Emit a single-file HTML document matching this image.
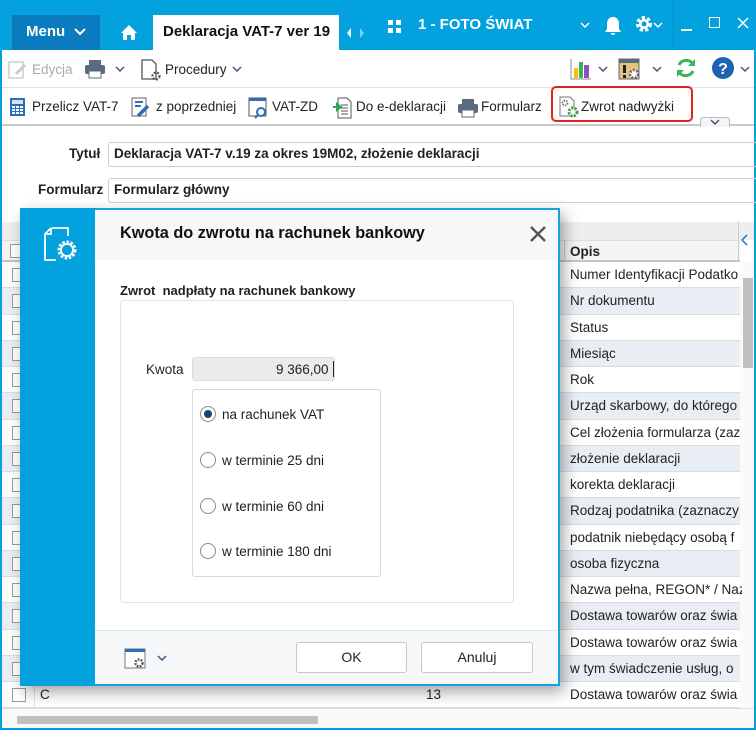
<!DOCTYPE html>
<html><head><meta charset="utf-8"><style>
*{box-sizing:border-box;margin:0;padding:0}
body{width:756px;height:730px;overflow:hidden;font-family:"Liberation Sans",sans-serif;font-size:13px;color:#222;background:#fff;position:relative}
.abs{position:absolute}
.win{position:absolute;left:0;top:0;width:756px;height:730px;border:2px solid #05a0df;border-top:none}
.title{left:0;top:0;width:756px;height:50px;background:#04a1df}
.tb1{top:50px;left:2px;width:752px;height:38px;border-bottom:1px solid #e2e2e2}
.tb2{top:89px;left:2px;width:752px;height:37px;border-bottom:2px solid #c8c8c8}
.t{position:absolute;white-space:nowrap}
.tb2 .t,.tb1 .t{font-size:13.5px!important}
.row{position:absolute;left:2px;width:738px;height:26.25px;border-bottom:1px solid #d8dde2}
.row.s{background:#e8eef3}
.cb{position:absolute;left:10px;top:6px;width:14px;height:14px;border:1px solid #9a9a9a;background:#fff}
.row .o{position:absolute;left:568px;top:5px;font-size:13.5px;white-space:nowrap;width:172px;overflow:hidden}
.radio{position:absolute;left:200px;width:16px;height:16px;border-radius:50%;border:1px solid #8a8a8a;background:#fff}
</style></head><body>
<div class="abs title">
 <div class="abs" style="left:12px;top:15px;width:88px;height:35px;background:#0a7bbf"></div>
 <div class="t" style="left:26px;top:23px;color:#fff;font-weight:bold;font-size:15px">Menu</div>
 <svg class="abs" style="left:74px;top:28px" width="12" height="8"><path d="M1 1l5 5 5-5" stroke="#fff" stroke-width="2" fill="none"/></svg>
 <svg class="abs" style="left:120px;top:24px" width="18" height="17"><path d="M9 1L1 9h2v7h4v-5h4v5h4V9h2z" fill="#fff"/></svg>
 <div class="abs" style="left:153px;top:15px;width:186px;height:35px;background:#fff"></div>
 <div class="t" style="left:163px;top:23px;font-weight:bold;font-size:15px;color:#111">Deklaracja VAT-7 ver 19</div>
 <svg class="abs" style="left:346px;top:27px" width="20" height="12"><path d="M5 1L1 6l4 5z" fill="#fff"/><path d="M14 1l4 5-4 5z" fill="#7fd0f0"/></svg>
 <svg class="abs" style="left:388px;top:20px" width="14" height="14"><rect x="0" y="0" width="5" height="5" fill="#fff"/><rect x="8" y="0" width="5" height="5" fill="#fff"/><rect x="0" y="8" width="5" height="5" fill="#fff"/><rect x="8" y="8" width="5" height="5" fill="#fff"/></svg>
 <div class="t" style="left:418px;top:16px;color:#fff;font-weight:bold;font-size:15px">1 - FOTO ŚWIAT</div>
 <svg class="abs" style="left:580px;top:22px" width="10" height="7"><path d="M1 1l4 4 4-4" stroke="#fff" stroke-width="1.5" fill="none"/></svg>
 <svg class="abs" style="left:604px;top:16px" width="18" height="20"><path d="M9 1c-4 0-6 3-6 7v5l-2 3h16l-2-3V8c0-4-2-7-6-7z M7 17h4a2 2 0 0 1-4 0" fill="#fff"/></svg>
 <svg class="abs" style="left:635px;top:15px" width="18" height="18"><circle cx="9" cy="9" r="6" fill="none" stroke="#fff" stroke-width="4" stroke-dasharray="3 2.2"/><circle cx="9" cy="9" r="5" fill="#fff"/><circle cx="9" cy="9" r="2.5" fill="#04a1df"/></svg>
 <svg class="abs" style="left:653px;top:22px" width="10" height="7"><path d="M1 1l4 4 4-4" stroke="#fff" stroke-width="1.5" fill="none"/></svg>
 <div class="abs" style="left:673px;top:0;width:1px;height:50px;background:#0890c8"></div>
 <div class="abs" style="left:681px;top:29px;width:11px;height:1.5px;background:#fff"></div>
 <div class="abs" style="left:709px;top:17px;width:11px;height:11px;border:1.5px solid #fff"></div>
 <svg class="abs" style="left:737px;top:17px" width="12" height="12"><path d="M1 1l10 10M11 1L1 11" stroke="#fff" stroke-width="1.5"/></svg>
</div>
<div class="win"></div>
<div class="abs tb1">
 <svg class="abs" style="left:6px;top:10px" width="20" height="20"><rect x="1" y="2" width="14" height="16" fill="none" stroke="#ccc" stroke-width="1.5"/><path d="M8 14l9-9" stroke="#ccc" stroke-width="3"/></svg>
 <div class="t" style="left:30px;top:12px;color:#aaa;font-size:14px">Edycja</div>
 <svg class="abs" style="left:82px;top:9px" width="22" height="20"><rect x="5" y="1" width="12" height="5" fill="#5a6b7d"/><rect x="1" y="6" width="20" height="9" rx="2" fill="#5a6b7d"/><rect x="5" y="12" width="12" height="7" fill="#fff" stroke="#5a6b7d"/></svg>
 <svg class="abs" style="left:113px;top:16px" width="10" height="7"><path d="M1 1l4 4 4-4" stroke="#3a5a80" stroke-width="1.5" fill="none"/></svg>
 <svg class="abs" style="left:138px;top:9px" width="22" height="22"><path d="M2 1h10l4 4v15H2z" fill="none" stroke="#555" stroke-width="1.3"/><circle cx="16" cy="17" r="3.5" fill="none" stroke="#555" stroke-width="2.2" stroke-dasharray="2 1.5"/></svg>
 <div class="t" style="left:163px;top:12px;font-size:14px">Procedury</div>
 <svg class="abs" style="left:230px;top:16px" width="10" height="7"><path d="M1 1l4 4 4-4" stroke="#3a5a80" stroke-width="1.5" fill="none"/></svg>
 <svg class="abs" style="left:568px;top:8px" width="22" height="22"><path d="M1 1v20h20" stroke="#888" fill="none"/><rect x="4" y="10" width="4" height="10" fill="#f3c300"/><rect x="9" y="4" width="4" height="16" fill="#3ab54a"/><rect x="14" y="7" width="5" height="13" fill="#8d4fc4"/></svg>
 <svg class="abs" style="left:596px;top:16px" width="10" height="7"><path d="M1 1l4 4 4-4" stroke="#3a5a80" stroke-width="1.5" fill="none"/></svg>
 <svg class="abs" style="left:616px;top:8px" width="24" height="22"><rect x="1" y="1" width="20" height="20" fill="#e8c080" stroke="#5a6b7d"/><rect x="1" y="1" width="20" height="4" fill="#5a6b7d"/><rect x="5" y="7" width="3" height="8" fill="#222"/><rect x="5" y="17" width="3" height="3" fill="#222"/><circle cx="16" cy="16" r="4" fill="#fff" stroke="#666" stroke-width="2.5" stroke-dasharray="2 1.5"/></svg>
 <svg class="abs" style="left:650px;top:16px" width="10" height="7"><path d="M1 1l4 4 4-4" stroke="#3a5a80" stroke-width="1.5" fill="none"/></svg>
 <svg class="abs" style="left:673px;top:7px" width="22" height="22"><path d="M18 7A8 8 0 0 0 4 8M4 15a8 8 0 0 0 14-1" stroke="#3ab55a" stroke-width="3" fill="none"/><path d="M20 2v7h-7z M2 20v-7h7z" fill="#3ab55a"/></svg>
 <svg class="abs" style="left:710px;top:7px" width="22" height="22"><circle cx="11" cy="11" r="11" fill="#1f63b3"/><text x="11" y="17" text-anchor="middle" fill="#fff" font-family="Liberation Sans" font-weight="bold" font-size="16">?</text></svg>
 <svg class="abs" style="left:738px;top:16px" width="10" height="7"><path d="M1 1l4 4 4-4" stroke="#3a5a80" stroke-width="1.5" fill="none"/></svg>
</div>
<div class="abs tb2">
 <svg class="abs" style="left:7px;top:8px" width="18" height="20"><rect x="1" y="1" width="15" height="18" fill="#2b6fb8"/><rect x="3" y="3" width="11" height="4" fill="#cfe3f6"/><g fill="#fff"><rect x="3" y="9" width="3" height="2"/><rect x="7" y="9" width="3" height="2"/><rect x="11" y="9" width="3" height="2"/><rect x="3" y="12" width="3" height="2"/><rect x="7" y="12" width="3" height="2"/><rect x="11" y="12" width="3" height="2"/><rect x="3" y="15" width="3" height="2"/><rect x="7" y="15" width="3" height="2"/><rect x="11" y="15" width="3" height="2"/></g></svg>
 <div class="t" style="left:30px;top:10px;font-size:14px">Przelicz VAT-7</div>
 <svg class="abs" style="left:128px;top:8px" width="22" height="22"><rect x="2" y="1" width="14" height="18" fill="none" stroke="#666"/><path d="M5 5h8M5 9h6" stroke="#2b6fb8" stroke-width="2"/><path d="M8 19l10-10" stroke="#2b6fb8" stroke-width="3.5"/></svg>
 <div class="t" style="left:154px;top:10px;font-size:14px">z poprzedniej</div>
 <svg class="abs" style="left:245px;top:8px" width="22" height="22"><rect x="2" y="1" width="17" height="18" fill="none" stroke="#555"/><rect x="2" y="1" width="17" height="3" fill="#2b6fb8"/><circle cx="14" cy="15" r="4" fill="#fff" stroke="#2b6fb8" stroke-width="2"/><path d="M11 18l-3 3" stroke="#2b6fb8" stroke-width="2"/></svg>
 <div class="t" style="left:270px;top:10px;font-size:14px">VAT-ZD</div>
 <svg class="abs" style="left:330px;top:8px" width="22" height="22"><path d="M6 1h9l4 4v16H6z" fill="#fff" stroke="#555"/><path d="M9 8h7M9 11h7M9 14h7M9 17h7" stroke="#555"/><path d="M1 10h6M5 7l4 3-4 3z" stroke="#2aa858" stroke-width="2" fill="#2aa858"/></svg>
 <div class="t" style="left:354px;top:10px;font-size:14px">Do e-deklaracji</div>
 <svg class="abs" style="left:455px;top:9px" width="22" height="20"><rect x="5" y="1" width="12" height="5" fill="#5a6b7d"/><rect x="1" y="6" width="20" height="9" rx="2" fill="#5a6b7d"/><rect x="5" y="12" width="12" height="7" fill="#fff" stroke="#5a6b7d"/></svg>
 <div class="t" style="left:479px;top:10px;font-size:14px">Formularz</div>
 <div class="abs" style="left:549px;top:-3px;width:142px;height:36px;border:2px solid #e42222;border-radius:5px"></div>
 <svg class="abs" style="left:556px;top:7px" width="22" height="22"><path d="M2 1h10l4 4v15H2z" fill="#fff" stroke="#777"/><circle cx="7" cy="7" r="2.5" fill="none" stroke="#777" stroke-width="1.8" stroke-dasharray="1.5 1"/><circle cx="15" cy="16" r="4" fill="#fff" stroke="#3a9a48" stroke-width="3" stroke-dasharray="2 1.4"/></svg>
 <div class="t" style="left:579px;top:10px;font-size:14px">Zwrot nadwyżki</div>
 <div class="abs" style="left:698px;top:28px;width:30px;height:10px;border:1px solid #bbb;border-bottom:none;border-radius:3px 3px 0 0;background:#f4f4f4"></div>
 <svg class="abs" style="left:708px;top:30px" width="10" height="6"><path d="M1 1l4 4 4-4" stroke="#3a5a80" stroke-width="1.5" fill="none"/></svg>
</div>
<div class="t" style="left:69px;top:146px;font-weight:bold;font-size:13.5px">Tytuł</div>
<div class="abs" style="left:108px;top:142px;width:650px;height:25px;border:1px solid #ccc;border-radius:3px"></div>
<div class="t" style="left:114px;top:146px;font-weight:bold;font-size:13.5px">Deklaracja VAT-7 v.19 za okres 19M02, złożenie deklaracji</div>
<div class="t" style="left:38px;top:182px;font-weight:bold;font-size:13.5px">Formularz</div>
<div class="abs" style="left:108px;top:178px;width:650px;height:25px;border:1px solid #ccc;border-radius:3px"></div>
<div class="t" style="left:114px;top:182px;font-weight:bold;font-size:13.5px">Formularz główny</div>
<!-- grid -->
<div class="abs" style="left:2px;top:222px;width:752px;height:18px;background:#eeeeee"></div>
<div class="abs" style="left:2px;top:240px;width:738px;height:22px;background:#f4f4f4;border-top:1px solid #ddd;border-bottom:2px solid #c4c4c4"></div>
<div class="abs" style="left:564px;top:240px;width:1px;height:22px;background:#ccc"></div>
<div class="abs" style="left:10px;top:244px;width:14px;height:14px;border:1px solid #9a9a9a;background:#fff"></div>
<div class="t" style="left:570px;top:244px;font-weight:bold;font-size:13.5px">Opis</div>
<div class="abs" style="left:738px;top:222px;width:1px;height:40px;background:#ccc"></div>
<svg class="abs" style="left:741px;top:234px" width="8" height="12"><path d="M6 1L1 6l5 5" stroke="#2b6fb8" stroke-width="1.5" fill="none"/></svg>
<div class="abs" style="left:740px;top:262px;width:14px;height:448px;background:#fafafa"></div>
<div class="abs" style="left:743px;top:278px;width:10px;height:90px;background:#c0c0c0"></div>
<div class="abs" style="left:2px;top:708px;width:752px;height:20px;background:#fafafa;border-top:1px solid #ddd"></div>
<div class="abs" style="left:17px;top:716px;width:301px;height:8px;background:#c0c0c0"></div>
<div id="rows"></div>
<script>
var r=["Numer Identyfikacji Podatko","Nr dokumentu","Status","Miesiąc","Rok","Urząd skarbowy, do którego","Cel złożenia formularza (zaz","złożenie deklaracji","korekta deklaracji","Rodzaj podatnika (zaznaczy","podatnik niebędący osobą f","osoba fizyczna","Nazwa pełna, REGON* / Naz","Dostawa towarów oraz świa","Dostawa towarów oraz świa","w tym świadczenie usług, o","Dostawa towarów oraz świa"];
var h="";for(var i=0;i<r.length;i++){h+='<div class="row'+(i%2?' s':'')+'" style="top:'+(262+i*26.25)+'px"><div class="cb"></div><div class="abs" style="left:32px;top:0;width:1px;height:26px;background:#dde3ea"></div>'+(i==16?'<div class="t" style="left:38px;top:5px;font-size:13.5px">C</div><div class="t" style="left:424px;top:5px;font-size:13.5px">13</div>':'')+'<div class="o">'+r[i]+'</div></div>';}
document.getElementById("rows").innerHTML=h;
</script>
<!-- dialog -->
<div class="abs" style="left:20px;top:208px;width:540px;height:478px;background:#fff;border:2px solid #14a3df;box-shadow:4px 6px 14px rgba(0,0,0,.35)"></div>
<div class="abs" style="left:20px;top:208px;width:75px;height:478px;background:#04a1df"></div>
<svg class="abs" style="left:42px;top:225px" width="40" height="40"><path d="M10 3h16v8M9 3L3 9v26h11M3 9h6V3" stroke="#fff" stroke-width="1.8" fill="none"/><circle cx="25" cy="25" r="8" fill="none" stroke="#fff" stroke-width="3" stroke-dasharray="2.5 1.6"/><circle cx="25" cy="25" r="6" fill="none" stroke="#fff" stroke-width="1.8"/></svg>
<div class="abs" style="left:95px;top:210px;width:463px;height:50px;background:#f6f7f8"></div>
<div class="t" style="left:120px;top:224px;font-size:16.3px;font-weight:bold;color:#111">Kwota do zwrotu na rachunek bankowy</div>
<svg class="abs" style="left:530px;top:226px" width="16" height="16"><path d="M1 1l14 14M15 1L1 15" stroke="#555" stroke-width="2.4"/></svg>
<div class="t" style="left:120px;top:283px;font-weight:bold;font-size:13px">Zwrot&nbsp; nadpłaty na rachunek bankowy</div>
<div class="abs" style="left:120px;top:300px;width:394px;height:303px;border:1px solid #e2e2e2;border-radius:4px"></div>
<div class="t" style="left:146px;top:362px;font-size:13.5px">Kwota</div>
<div class="abs" style="left:192px;top:357px;width:143px;height:24px;background:#ebebeb;border:1px solid #ddd;border-radius:3px"></div>
<div class="t" style="left:276px;top:362px;font-size:13.5px">9 366,00</div>
<div class="abs" style="left:333px;top:361px;width:1px;height:16px;background:#222"></div>
<div class="abs" style="left:192px;top:389px;width:189px;height:188px;border:1px solid #d8d8d8;border-radius:3px"></div>
<div class="radio" style="top:406px"></div><div class="abs" style="left:204px;top:410px;width:8px;height:8px;border-radius:50%;background:#12457a"></div>
<div class="t" style="left:222px;top:407px;font-size:13.5px">na rachunek VAT</div>
<div class="radio" style="top:452px"></div><div class="t" style="left:222px;top:453px;font-size:13.5px">w terminie 25 dni</div>
<div class="radio" style="top:498px"></div><div class="t" style="left:222px;top:499px;font-size:13.5px">w terminie 60 dni</div>
<div class="radio" style="top:543px"></div><div class="t" style="left:222px;top:544px;font-size:13.5px">w terminie 180 dni</div>
<div class="abs" style="left:95px;top:630px;width:463px;height:54px;background:#f6f7f8;border-top:1px solid #cfe6f3"></div>
<svg class="abs" style="left:124px;top:648px" width="24" height="22"><rect x="1" y="1" width="20" height="19" fill="#fff" stroke="#777"/><rect x="1" y="1" width="20" height="3" fill="#2b6fb8"/><circle cx="15" cy="15" r="3.5" fill="#fff" stroke="#555" stroke-width="2.4" stroke-dasharray="1.8 1.2"/></svg>
<svg class="abs" style="left:157px;top:655px" width="10" height="7"><path d="M1 1l4 4 4-4" stroke="#3a5a80" stroke-width="1.5" fill="none"/></svg>
<div class="abs" style="left:296px;top:642px;width:111px;height:31px;border:1px solid #c8c8c8;border-radius:3px;background:#fff;text-align:center;line-height:29px;font-size:14px">OK</div>
<div class="abs" style="left:421px;top:642px;width:112px;height:31px;border:1px solid #c8c8c8;border-radius:3px;background:#fff;text-align:center;line-height:29px;font-size:14px">Anuluj</div>
</body></html>
